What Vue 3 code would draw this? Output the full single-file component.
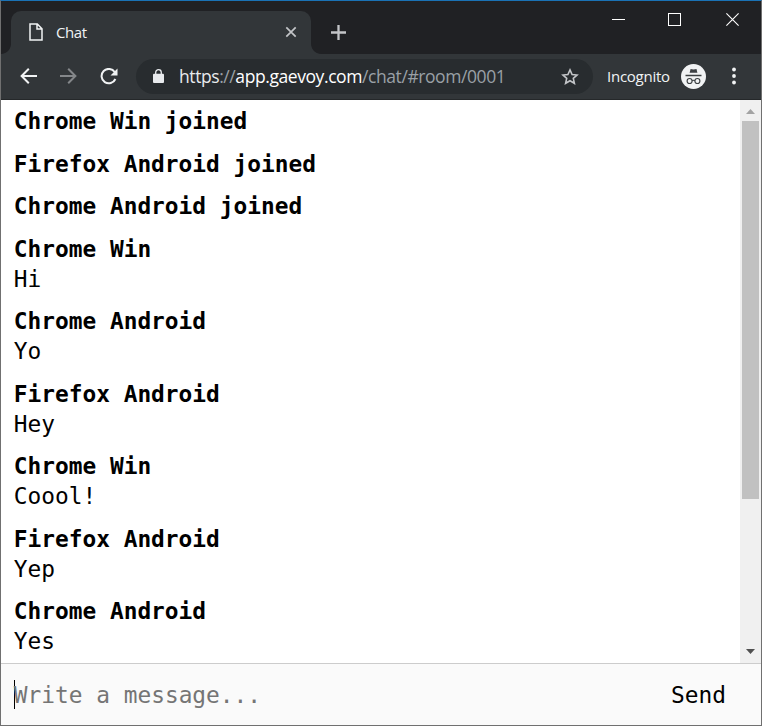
<script setup>
const messages = [
  { name: 'Chrome Win joined' },
  { name: 'Firefox Android joined' },
  { name: 'Chrome Android joined' },
  { name: 'Chrome Win', text: 'Hi' },
  { name: 'Chrome Android', text: 'Yo' },
  { name: 'Firefox Android', text: 'Hey' },
  { name: 'Chrome Win', text: 'Coool!' },
  { name: 'Firefox Android', text: 'Yep' },
  { name: 'Chrome Android', text: 'Yes' },
]
</script>

<template>
  <div class="window">
    <header class="tabs">
      <div class="tab">
        <svg class="doc" width="14" height="18" viewBox="0 0 14 18"><path d="M1 1H8.3L13 5.8V17H1ZM8 1V6H13" /></svg>
        <span class="title">Chat</span>
        <svg class="close" width="12" height="12" viewBox="0 0 12 12"><path d="M1.3 1.3L10.7 10.7M10.7 1.3L1.3 10.7" /></svg>
      </div>
      <svg class="plus" width="15" height="15" viewBox="0 0 15 15"><path d="M7.5 0V15M0 7.5H15" /></svg>
      <svg class="controls" width="128" height="14" viewBox="0 0 128 14">
        <path d="M0 6.5H13M56.5 .5H68.5V12.5H56.5Z" shape-rendering="crispEdges" />
        <path d="M114.4 .4L126.6 12.6M126.6 .4L114.4 12.6" />
      </svg>
    </header>
    <nav class="toolbar">
      <svg class="back" width="17" height="16" viewBox="0 0 17 16"><path d="M17 8H2M8.8 .8L1.6 8L8.8 15.2" /></svg>
      <svg class="forward" width="17" height="16" viewBox="0 0 17 16"><path d="M0 8H15M8.2 .8L15.4 8L8.2 15.2" /></svg>
      <svg class="reload" width="18" height="17" viewBox="0 0 18 17">
        <path d="M14.7 4A7.2 7.2 0 1 0 15.4 11" />
        <path class="solid" d="M17.5 .4V7.4H10.5Z" />
      </svg>
      <div class="address">
        <svg class="lock" width="11" height="14" viewBox="0 0 11 14">
          <rect x="0" y="4.8" width="11" height="9.2" rx="1" fill="#e8eaed" />
          <path d="M2.7 5.5V3.5a2.8 2.8 0 0 1 5.6 0v2" fill="none" stroke="#e8eaed" stroke-width="1.3" />
        </svg>
        <span class="url"><span class="scheme">https</span>://<b>app.gaevoy.com</b>/chat/#room/0001</span>
        <svg class="star" width="18" height="17" viewBox="0 0 18 17"><path d="M9 1.9L11.1 6.5L16 7L12.3 10.3L13.4 15.3L9 12.7L4.6 15.3L5.7 10.3L2 7L6.9 6.5Z" /></svg>
      </div>
      <span class="incognito">Incognito</span>
      <svg class="avatar" width="25" height="25" viewBox="0 0 25 25">
        <circle cx="12.5" cy="12.5" r="12.5" fill="#f1f3f4" />
        <path d="M9.6 4.9L12.5 5.5L15.5 4.9L16.4 8.8H8.6Z" fill="#3c4043" />
        <path d="M4.5 11.5H20.5" stroke="#3c4043" stroke-width="1.5" />
        <g fill="none" stroke="#3c4043" stroke-width="1.15">
          <circle cx="8.6" cy="17" r="2.5" /><circle cx="16.4" cy="17" r="2.5" />
          <path d="M11.1 16.7Q12.5 15.8 13.9 16.7" />
        </g>
      </svg>
      <svg class="dots" width="4" height="18" viewBox="0 0 4 18"><circle cx="2" cy="2.5" r="1.9" /><circle cx="2" cy="9" r="1.9" /><circle cx="2" cy="15.5" r="1.9" /></svg>
    </nav>
    <main class="chat">
      <div class="messages">
        <div v-for="(m, i) in messages" :key="i" class="message">
          <strong>{{ m.name }}</strong>
          <span v-if="m.text">{{ m.text }}</span>
        </div>
      </div>
      <div class="scrollbar">
        <svg width="21" height="21" viewBox="0 0 21 21"><path d="M6 14L10.5 9L15 14Z" fill="#a3a3a3" /></svg>
        <div class="thumb"></div>
        <svg class="down" width="21" height="21" viewBox="0 0 21 21"><path d="M6 7L10.5 12L15 7Z" fill="#505050" /></svg>
      </div>
    </main>
    <footer class="composer">
      <span class="caret"></span>
      <span class="placeholder">Write a message...</span>
      <span class="send">Send</span>
    </footer>
  </div>
</template>

<style>
body { background: #fff; }
</style>

<style scoped>
.window {
  box-sizing: border-box;
  width: 762px;
  height: 726px;
  display: flex;
  flex-direction: column;
  border: 1px solid #707070;
  border-top-color: #1a72b5;
  font-family: "Open Sans", "Noto Sans", sans-serif;
  overflow: hidden;
}
svg { display: block; flex: none; }
.tabs {
  height: 53px;
  box-sizing: border-box;
  flex: none;
  display: flex;
  align-items: flex-start;
  padding: 10px 21px 0 10px;
  background: #202124;
}
.tab {
  position: relative;
  box-sizing: border-box;
  width: 300px;
  height: 43px;
  display: flex;
  align-items: center;
  padding: 0 14px 1px 18px;
  background: #323639;
  border-radius: 10px 10px 0 0;
}
.tab::before, .tab::after {
  content: "";
  position: absolute;
  bottom: 0;
  width: 10px;
  height: 10px;
}
.tab::before { left: -10px; background: radial-gradient(circle at 0 0, transparent 9.5px, #323639 10.3px); }
.tab::after { right: -10px; background: radial-gradient(circle at 100% 0, transparent 9.5px, #323639 10.3px); }
.doc { fill: none; stroke: #f1f3f4; stroke-width: 1.5; }
.title { margin-left: 13px; flex: 1; color: #f1f3f4; font-size: 15px; letter-spacing: -.45px; }
.close { fill: none; stroke: #c3c5c8; stroke-width: 1.7; }
.plus { margin: 14px 0 0 20px; stroke: #c3c5c8; stroke-width: 2.3; }
.controls { margin: 2px 0 0 auto; fill: none; stroke: #fff; stroke-width: 1.1; }
.toolbar {
  height: 46px;
  box-sizing: border-box;
  flex: none;
  display: flex;
  align-items: center;
  padding: 0 25.5px 1px 19px;
  background: #323639;
  border-bottom: 1px solid #25282a;
}
.back, .forward, .reload { fill: none; stroke: #f1f3f4; stroke-width: 2; }
.forward { margin-left: 23px; stroke: #84878a; }
.reload { margin-left: 23px; }
.solid { fill: #f1f3f4; stroke: none; }
.address {
  box-sizing: border-box;
  width: 457px;
  height: 35px;
  display: flex;
  align-items: center;
  margin-left: 18px;
  padding: 0 14px 0 17px;
  border-radius: 18px;
  background: #282c2f;
}
.url { flex: 1; margin-left: 15px; font-size: 17.5px; letter-spacing: -.42px; color: #9aa0a6; white-space: nowrap; }
.scheme { color: #e8eaed; }
.url b { font-weight: 400; color: #fff; }
.star { fill: none; stroke: #c3c5c8; stroke-width: 1.6; }
.incognito { width: 74px; margin-left: 14px; font-size: 15px; letter-spacing: -.25px; color: #f1f3f4; white-space: nowrap; }
.dots { margin-left: auto; fill: #f1f3f4; }
.chat { height: 563px; flex: none; display: flex; background: #fff; overflow: hidden; }
.messages {
  flex: 1;
  display: flex;
  flex-direction: column;
  gap: 12.5px;
  padding: 6px 12px 0 12.7px;
  font: 22.84px/30px "DejaVu Sans Mono", monospace;
  color: #000;
}
.message { display: flex; flex-direction: column; white-space: nowrap; }
.scrollbar { width: 21px; display: flex; flex-direction: column; background: #f0f0f0; }
.thumb { width: 17px; height: 378px; margin-left: 2px; background: #c1c1c1; }
.down { margin-top: auto; }
.composer {
  flex: 1;
  display: flex;
  align-items: center;
  padding: 0 35px 0 13px;
  border-top: 1px solid #ccc;
  background: #fafafa;
  font: 22.84px/30px "DejaVu Sans Mono", monospace;
}
.caret { width: 1px; height: 29px; background: #000; }
.placeholder { flex: 1; margin-left: -1.3px; color: #757575; }
.send { color: #000; }
</style>
